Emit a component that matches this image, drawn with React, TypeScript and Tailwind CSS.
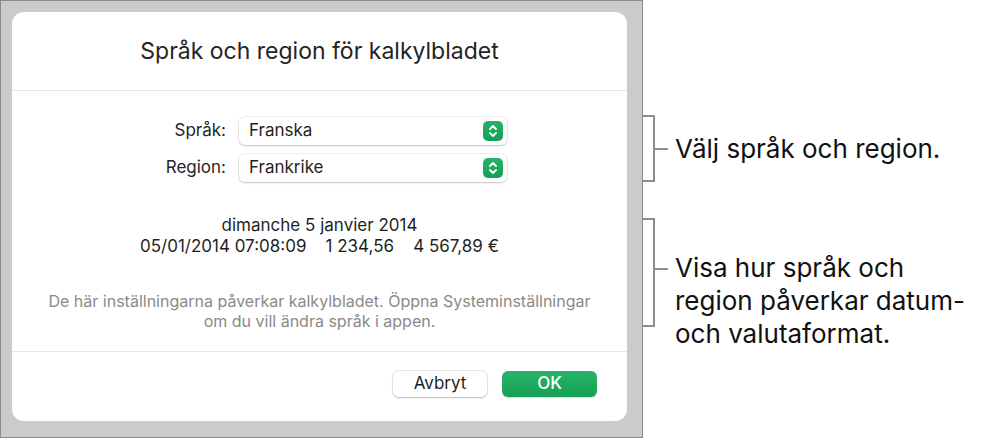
import { ReactNode } from "react";

const Stepper = () => (
  <span className="flex h-5 w-5 items-center justify-center rounded-[5px] bg-linear-to-b from-[#27b268] to-[#159f55]">
    <svg width="10" height="14" viewBox="0 0 10 14" fill="none">
      <path d="M2 5 L5 2 L8 5" stroke="white" strokeWidth="1.8" strokeLinecap="round" strokeLinejoin="round" />
      <path d="M2 9 L5 12 L8 9" stroke="white" strokeWidth="1.8" strokeLinecap="round" strokeLinejoin="round" />
    </svg>
  </span>
);

const PopupRow = ({ label, value }: { label: string; value: string }) => (
  <div className="flex items-center">
    <span className="w-[227px] pr-[13px] text-right text-[17px] text-[#262626]">{label}</span>
    <div className="flex h-[28px] w-[268px] items-center justify-between rounded-[6px] bg-white pl-[10px] pr-[4px] shadow-[0_0_0_1px_rgba(0,0,0,0.06),0_1px_2px_rgba(0,0,0,0.18)]">
      <span className="text-[17px] text-[#1f1f1f]">{value}</span>
      <Stepper />
    </div>
  </div>
);

const Bracket = ({ height }: { height: string }) => (
  <div className={`w-[12px] border-y-2 border-r-2 border-[#8e8e8e] ${height}`} />
);

const Note = ({ children }: { children: ReactNode }) => (
  <p className="text-[26px] leading-[33px] text-[#111]">{children}</p>
);

export default function App() {
  return (
    <div className="flex h-[438px] w-[991px] bg-white font-['Inter',sans-serif]">
      <div className="h-[438px] w-[643px] shrink-0 border border-[#8a8a8a] bg-[#cbcbcb] pl-[11px] pt-[11px]">
        <div className="flex h-[409px] w-[615px] flex-col rounded-[12px] bg-white">
          <div className="flex h-[79px] items-center justify-center border-b border-[#e6e6e6]">
            <h1 className="text-[23px] text-[#242424]">Språk och region för kalkylbladet</h1>
          </div>

          <div className="flex flex-col gap-[9px] pt-[26px]">
            <PopupRow label="Språk:" value="Franska" />
            <PopupRow label="Region:" value="Frankrike" />
          </div>

          <div className="mt-[33px] flex flex-col items-center text-[17px] leading-[21px] text-[#1f1f1f]">
            <p>dimanche 5 janvier 2014</p>
            <p className="whitespace-pre">05/01/2014 07:08:09    1 234,56    4 567,89 €</p>
          </div>

          <div className="mt-[34px] flex h-[61px] flex-col items-center border-b border-[#e6e6e6] text-[16px] leading-[20px] text-[#8a8a8a]">
            <p>De här inställningarna påverkar kalkylbladet. Öppna Systeminställningar</p>
            <p>om du vill ändra språk i appen.</p>
          </div>

          <div className="flex justify-end gap-[15px] pr-[30px] pt-[19px]">
            <button className="h-[26px] w-[94px] rounded-[6px] bg-white text-[17px] text-[#1f1f1f] shadow-[0_0_0_1px_rgba(0,0,0,0.08),0_1px_2px_rgba(0,0,0,0.2)]">
              Avbryt
            </button>
            <button className="h-[26px] w-[95px] rounded-[6px] bg-linear-to-b from-[#28b36a] to-[#13a055] text-[17px] font-medium text-white shadow-[0_1px_1px_rgba(0,0,0,0.15)]">
              OK
            </button>
          </div>
        </div>
      </div>

      <div className="flex flex-col pt-[115px]">
        <div className="flex items-center">
          <Bracket height="h-[67px]" />
          <div className="h-[2px] w-[13px] bg-[#8e8e8e]" />
          <div className="pl-[7px]">
            <Note>Välj språk och region.</Note>
          </div>
        </div>

        <div className="mt-[36px] flex items-start">
          <Bracket height="h-[109px]" />
          <div className="mt-[50px] h-[2px] w-[13px] bg-[#8e8e8e]" />
          <div className="mt-[33px] pl-[7px]">
            <Note>Visa hur språk och</Note>
            <Note>region påverkar datum-</Note>
            <Note>och valutaformat.</Note>
          </div>
        </div>
      </div>
    </div>
  );
}
